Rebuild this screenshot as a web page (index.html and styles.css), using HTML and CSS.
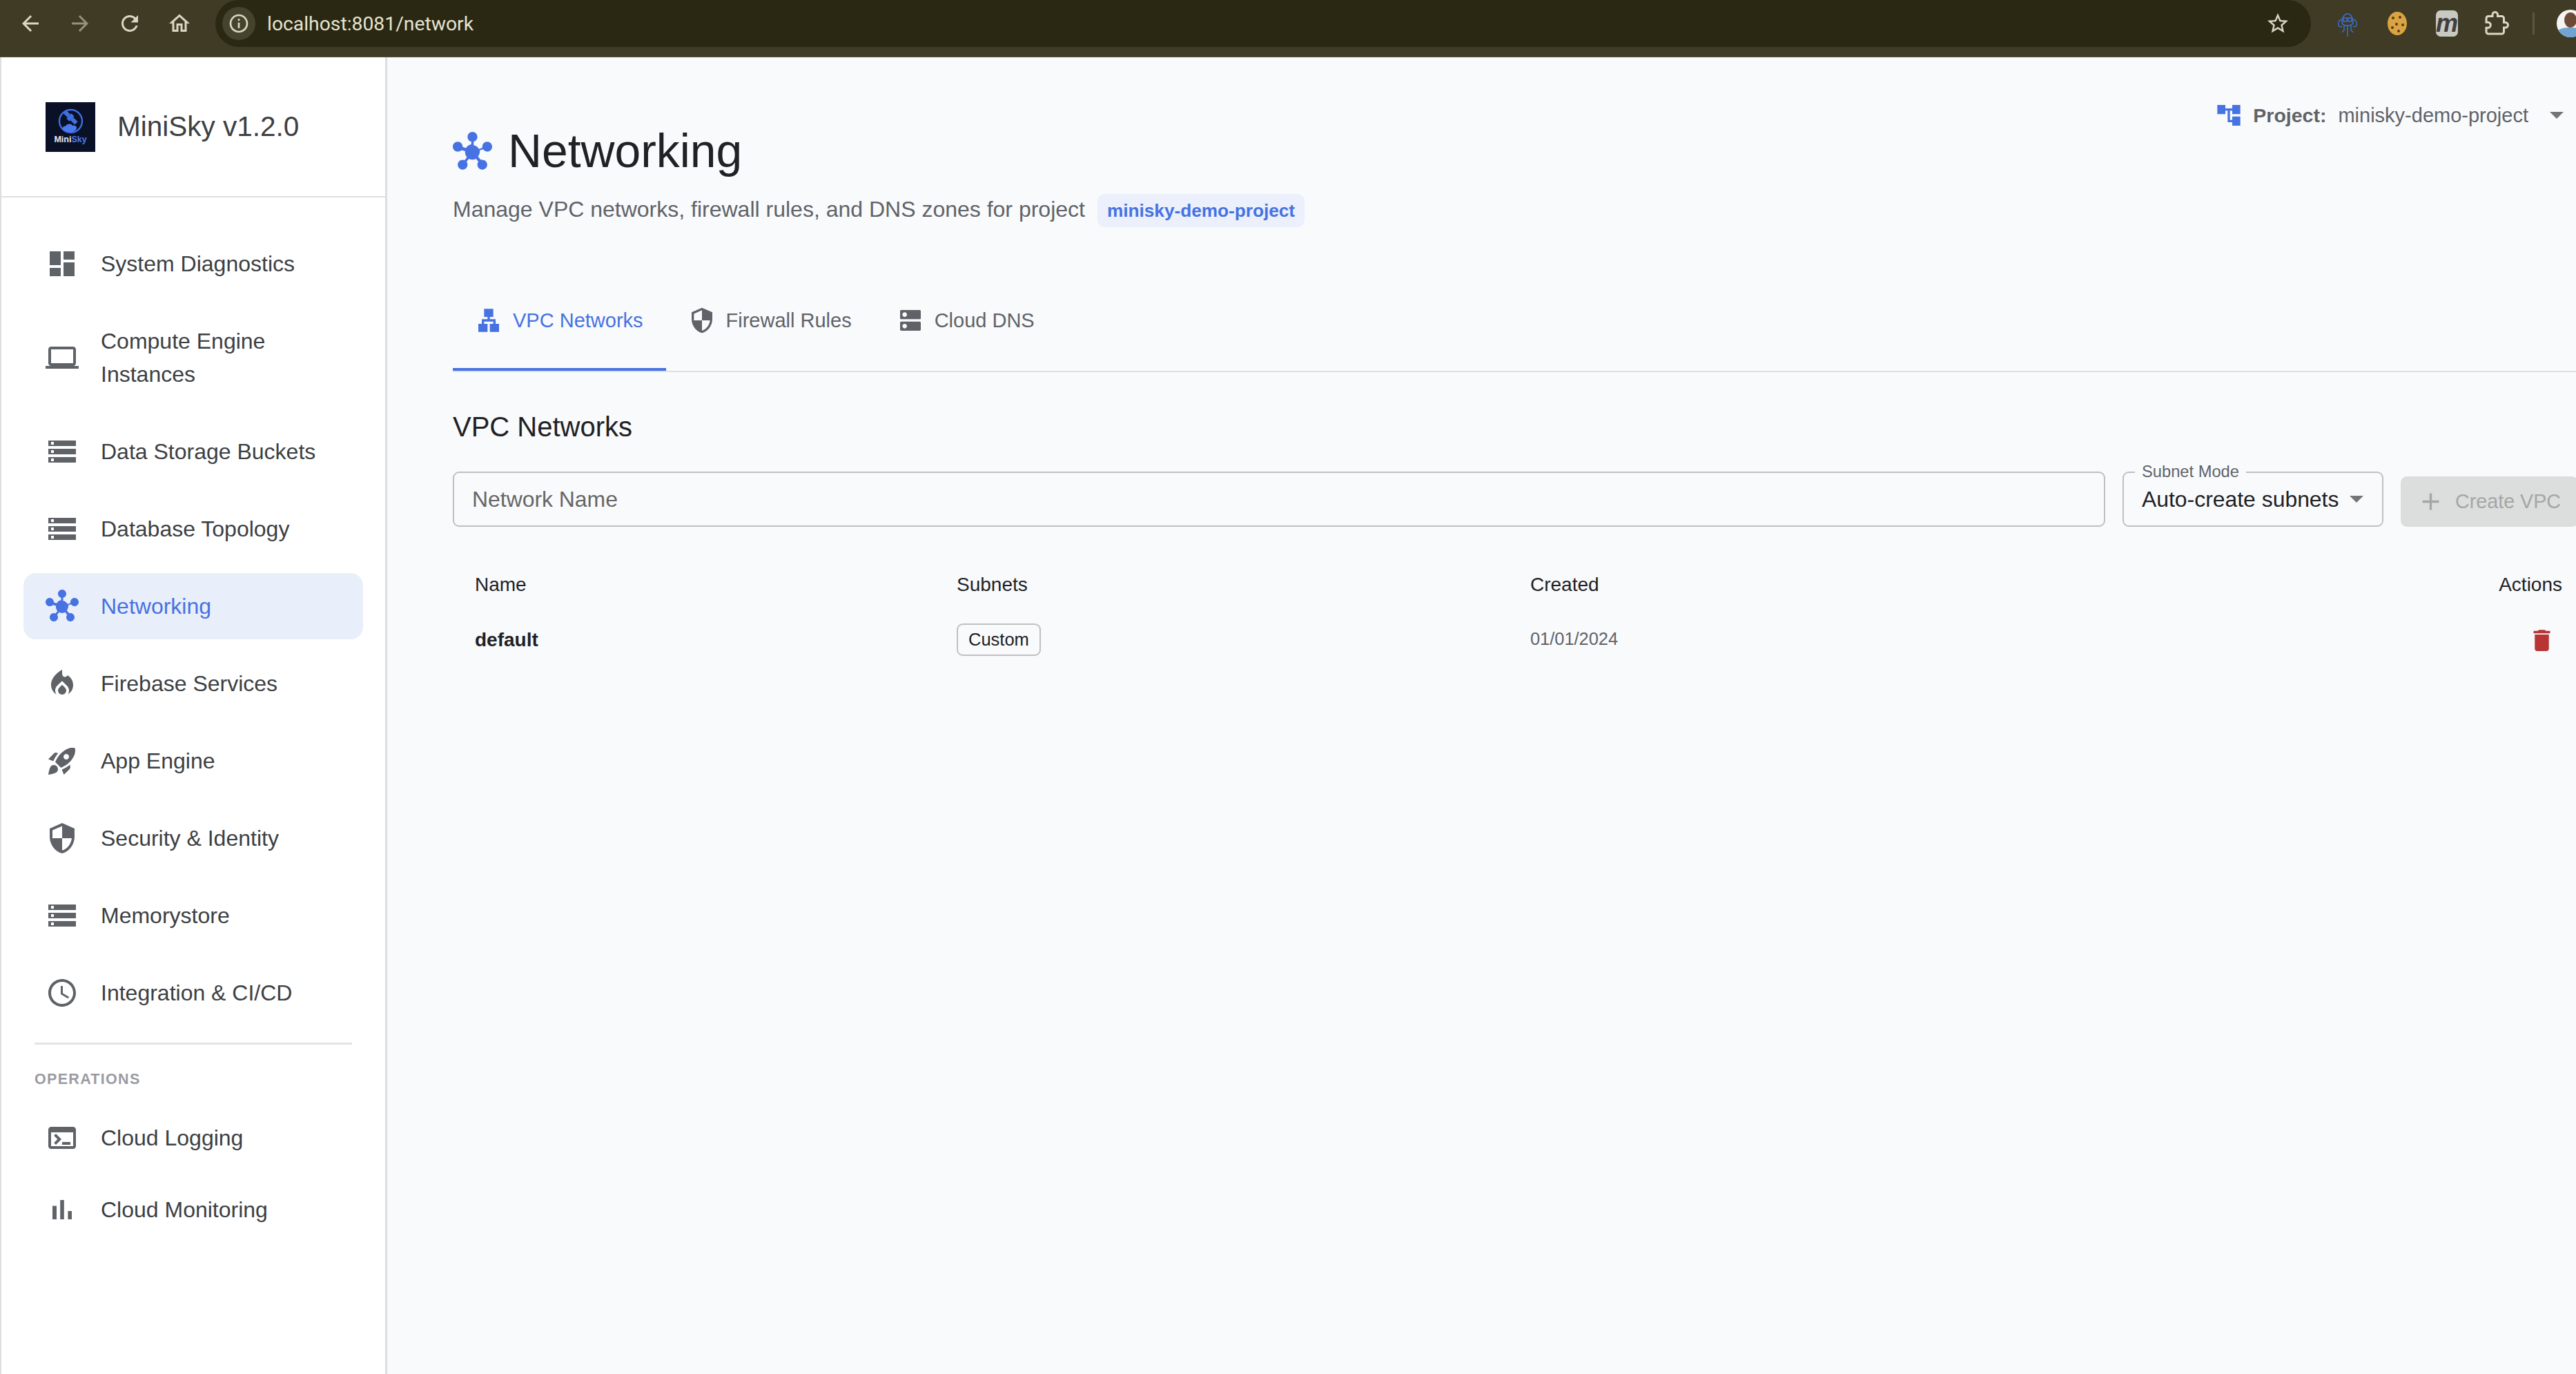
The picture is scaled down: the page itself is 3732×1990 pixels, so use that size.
FILE: index.html
```html
<!DOCTYPE html>
<html lang="en">
<head>
    <meta charset="UTF-8">
    <title>MiniSky - Networking</title>
    <link rel="stylesheet" href="styles.css">
</head>
<body>
    <!-- Material icons used across the page -->
    <svg class="icon-defs" xmlns="http://www.w3.org/2000/svg">
        <symbol id="i-dashboard" viewBox="0 0 24 24"><path d="M3 13h8V3H3v10zm0 8h8v-6H3v6zm10 0h8V11h-8v10zm0-18v6h8V3h-8z"/></symbol>
        <symbol id="i-laptop" viewBox="0 0 24 24"><path d="M20 18c1.1 0 1.99-.9 1.99-2L22 6c0-1.1-.9-2-2-2H4c-1.1 0-2 .9-2 2v10c0 1.1.9 2 2 2H0v2h24v-2h-4zM4 6h16v10H4V6z"/></symbol>
        <symbol id="i-storage" viewBox="0 0 24 24"><path d="M2 20h20v-4H2v4zm2-3h2v2H4v-2zM2 4v4h20V4H2zm4 3H4V5h2v2zm-4 7h20v-4H2v4zm2-3h2v2H4v-2z"/></symbol>
        <symbol id="i-hub" viewBox="0 0 24 24"><path d="M8.4 18.2c.38.5.6 1.12.6 1.8 0 1.66-1.34 3-3 3s-3-1.34-3-3 1.34-3 3-3c.44 0 .85.09 1.23.26l1.41-1.77c-.92-1.03-1.29-2.39-1.09-3.69l-2.03-.68C4.98 11.45 4.06 12 3 12c-1.66 0-3-1.34-3-3s1.34-3 3-3 3 1.34 3 3c0 .07 0 .14-.01.21l2.03.68c.64-1.21 1.82-2.09 3.22-2.32V5.91C9.96 5.57 9 4.4 9 3c0-1.66 1.34-3 3-3s3 1.34 3 3c0 1.4-.96 2.57-2.25 2.91v2.16c1.4.23 2.58 1.11 3.22 2.32l2.03-.68C18 9.14 18 9.07 18 9c0-1.66 1.34-3 3-3s3 1.34 3 3-1.34 3-3 3c-1.06 0-1.98-.55-2.52-1.37l-2.03.68c.2 1.29-.16 2.65-1.09 3.69l1.41 1.77C17.15 17.09 17.56 17 18 17c1.66 0 3 1.34 3 3s-1.34 3-3 3-3-1.34-3-3c0-.68.22-1.3.6-1.8l-1.41-1.77c-1.35.75-3.01.76-4.37 0L8.4 18.2z"/></symbol>
        <symbol id="i-fire" viewBox="0 0 24 24"><path d="M12 12.9l-2.13 2.09c-.56.56-.87 1.29-.87 2.07C9 18.68 10.35 20 12 20s3-1.32 3-2.94c0-.78-.31-1.52-.87-2.07L12 12.9z"/><path d="M16 6l-.44.55C14.38 8.02 12 7.08 12 5V2S4 6 4 13c0 2.92 1.56 5.47 3.89 6.86-.56-.79-.89-1.76-.89-2.8 0-1.32.52-2.56 1.47-3.5L12 10.1l3.53 3.47c.95.93 1.47 2.17 1.47 3.5 0 1.02-.31 1.96-.85 2.75.43-.26.82-.56 1.18-.9C18.98 17.72 20 15.5 20 13c0-2.57-1.24-5.16-4-7z"/></symbol>
        <symbol id="i-rocket" viewBox="0 0 24 24"><path d="M9.19 6.35c-2.04 2.29-3.44 5.58-3.57 5.89L2 10.69l4.05-4.05c.47-.47 1.15-.68 1.81-.55l1.33.26zM11.17 17s3.74-1.55 5.89-3.7c5.4-5.4 4.5-9.62 4.21-10.57-.95-.3-5.17-1.19-10.57 4.21C8.55 9.09 7 12.83 7 12.83L11.17 17zm6.48-2.19c-2.29 2.04-5.58 3.44-5.89 3.57L13.31 22l4.05-4.05c.47-.47.68-1.15.55-1.81l-.26-1.33zM9 18c0 .83-.34 1.58-.88 2.12C6.94 21.3 2 22 2 22s.7-4.94 1.88-6.12C4.42 15.34 5.17 15 6 15c1.66 0 3 1.34 3 3zm4-9c0-1.1.9-2 2-2s2 .9 2 2-.9 2-2 2-2-.9-2-2z"/></symbol>
        <symbol id="i-shield" viewBox="0 0 24 24"><path d="M12 1L3 5v6c0 5.55 3.84 10.74 9 12 5.16-1.26 9-6.45 9-12V5l-9-4zm0 10.99h7c-.53 4.12-3.28 7.79-7 8.94V12H5V6.3l7-3.11v8.8z"/></symbol>
        <symbol id="i-clock" viewBox="0 0 24 24"><path d="M11.99 2C6.47 2 2 6.48 2 12s4.47 10 9.99 10C17.52 22 22 17.52 22 12S17.52 2 11.99 2zM12 20c-4.42 0-8-3.58-8-8s3.58-8 8-8 8 3.58 8 8-3.58 8-8 8zm.5-13H11v6l5.25 3.15.75-1.23-4.5-2.67z"/></symbol>
        <symbol id="i-terminal" viewBox="0 0 24 24"><path d="M20 4H4c-1.1 0-2 .9-2 2v12c0 1.1.9 2 2 2h16c1.1 0 2-.9 2-2V6c0-1.1-.9-2-2-2zm0 14H4V8h16v10zm-2-1h-6v-2h6v2zM7.5 17l-1.41-1.41L8.67 13l-2.59-2.59L7.5 9l4 4-4 4z"/></symbol>
        <symbol id="i-chart" viewBox="0 0 24 24"><path d="M5 9.2h3V19H5zM10.6 5h2.8v14h-2.8zm5.6 8H19v6h-2.8z"/></symbol>
        <symbol id="i-tree" viewBox="0 0 24 24"><path d="M22 11V3h-7v3H9V3H2v8h7V8h2v10h4v3h7v-8h-7v3h-2V8h2v3z"/></symbol>
        <symbol id="i-lan" viewBox="0 0 24 24"><path d="M13 22h8v-7h-3v-4h-5V9h3V2H8v7h3v2H6v4H3v7h8v-7H8v-2h8v2h-3z"/></symbol>
        <symbol id="i-dns" viewBox="0 0 24 24"><path d="M20 13H4c-.55 0-1 .45-1 1v6c0 .55.45 1 1 1h16c.55 0 1-.45 1-1v-6c0-.55-.45-1-1-1zM7 19c-1.1 0-2-.9-2-2s.9-2 2-2 2 .9 2 2-.9 2-2 2zM20 3H4c-.55 0-1 .45-1 1v6c0 .55.45 1 1 1h16c.55 0 1-.45 1-1V4c0-.55-.45-1-1-1zM7 9c-1.1 0-2-.9-2-2s.9-2 2-2 2 .9 2 2-.9 2-2 2z"/></symbol>
        <symbol id="i-add" viewBox="0 0 24 24"><path d="M19 13h-6v6h-2v-6H5v-2h6V5h2v6h6v2z"/></symbol>
        <symbol id="i-delete" viewBox="0 0 24 24"><path d="M6 19c0 1.1.9 2 2 2h8c1.1 0 2-.9 2-2V7H6v12zM19 4h-3.5l-1-1h-5l-1 1H5v2h14V4z"/></symbol>
    </svg>

    <!-- Browser toolbar -->
    <div class="browser-bar">
        <div class="tool-btn"><svg class="tool-icon" viewBox="0 0 24 24"><path d="M20 11H7.83l5.59-5.59L12 4l-8 8 8 8 1.41-1.41L7.83 13H20v-2z"/></svg></div>
        <div class="tool-btn dim"><svg class="tool-icon" viewBox="0 0 24 24"><path d="M4 11h12.17l-5.59-5.59L12 4l8 8-8 8-1.41-1.41L16.17 13H4v-2z"/></svg></div>
        <div class="tool-btn"><svg class="tool-icon" viewBox="0 0 24 24"><path d="M17.65 6.35C16.2 4.9 14.21 4 12 4c-4.42 0-7.99 3.58-7.99 8s3.57 8 7.99 8c3.73 0 6.84-2.55 7.73-6h-2.08c-.82 2.33-3.04 4-5.65 4-3.31 0-6-2.69-6-6s2.69-6 6-6c1.66 0 3.14.69 4.22 1.78L13 11h7V4l-2.35 2.35z"/></svg></div>
        <div class="tool-btn"><svg class="tool-icon" viewBox="0 0 24 24"><path d="M12 5.69l5 4.5V18h-2v-6H9v6H7v-7.81l5-4.5M12 3L2 12h3v8h6v-6h2v6h6v-8h3L12 3z"/></svg></div>
        <div class="address-pill">
            <span class="site-info"><svg class="info-icon" viewBox="0 0 24 24"><path d="M11 7h2v2h-2zm0 4h2v6h-2zm1-9C6.48 2 2 6.48 2 12s4.48 10 10 10 10-4.48 10-10S17.52 2 12 2zm0 18c-4.41 0-8-3.59-8-8s3.59-8 8-8 8 3.59 8 8-3.59 8-8 8z"/></svg></span>
            <span class="url">localhost:8081/network</span>
            <svg class="star-icon" viewBox="0 0 24 24"><path d="M22 9.24l-7.19-.62L12 2 9.19 8.63 2 9.24l5.46 4.73L5.82 21 12 17.27 18.18 21l-1.63-7.03L22 9.24zM12 15.4l-3.76 2.27 1-4.28-3.32-2.88 4.38-.38L12 6.1l1.71 4.04 4.38.38-3.32 2.88 1 4.28L12 15.4z"/></svg>
        </div>
        <div class="extensions">
            <div class="tool-btn">
                <svg class="ext-icon" viewBox="0 0 36 44" fill="none" stroke="#3a6fd8" stroke-width="1.5">
                    <path d="M10 20c0-6 3-12 8-12s8 6 8 12c0 3-2 5-8 5s-8-2-8-5z"/>
                    <rect x="12" y="14" width="5" height="5"/><rect x="19" y="14" width="5" height="5"/>
                    <path d="M9 16c-4 2-5 6-4 9 1 2 4 2 5 1M27 16c4 2 5 6 4 9-1 2-4 2-5 1M13 25v6c0 2-2 2-3 4M23 25v6c0 2 2 2 3 4M18 25v16"/>
                </svg>
            </div>
            <div class="tool-btn">
                <svg class="ext-icon" viewBox="0 0 36 44">
                    <ellipse cx="18" cy="22" rx="14" ry="17" fill="#d9a441"/>
                    <circle cx="12" cy="14" r="2" fill="#5b3a17"/><circle cx="22" cy="13" r="2" fill="#5b3a17"/>
                    <circle cx="17" cy="23" r="2" fill="#5b3a17"/><circle cx="26" cy="24" r="2" fill="#5b3a17"/>
                    <circle cx="11" cy="28" r="2" fill="#5b3a17"/><circle cx="20" cy="33" r="2" fill="#5b3a17"/>
                </svg>
            </div>
            <div class="tool-btn"><span class="ext-m">m</span></div>
            <div class="tool-btn"><svg class="tool-icon puzzle" viewBox="0 0 24 24"><path d="M20.5 11H19V7c0-1.1-.9-2-2-2h-4V3.5C13 2.12 11.88 1 10.5 1S8 2.12 8 3.5V5H4c-1.1 0-1.99.9-1.99 2v3.8H3.5c1.49 0 2.7 1.21 2.7 2.7s-1.21 2.7-2.7 2.7H2V20c0 1.1.9 2 2 2h13c1.1 0 2-.9 2-2v-4h1.5c1.38 0 2.5-1.12 2.5-2.5S21.88 11 20.5 11z"/></svg></div>
        </div>
        <div class="bar-sep"></div>
        <svg class="avatar" viewBox="0 0 40 40">
            <clipPath id="avatarClip"><circle cx="20" cy="20" r="20"/></clipPath>
            <g clip-path="url(#avatarClip)">
                <rect width="40" height="40" fill="#f4f4f2"/>
                <ellipse cx="20" cy="15" rx="9" ry="11" fill="#6b4a36"/>
                <path d="M0 40V32c4-5 10-6 20-6s16 1 20 6v8z" fill="#6fa5cf"/>
            </g>
        </svg>
    </div>

    <div class="app">
        <!-- Sidebar -->
        <aside class="sidebar">
            <div class="brand">
                <svg class="brand-logo" viewBox="0 0 72 72">
                    <rect width="72" height="72" fill="#0a1026"/>
                    <circle cx="36.5" cy="27.5" r="16.5" fill="none" stroke="#3f6fe0" stroke-width="2.4"/>
                    <g fill="#3f6fe0" transform="rotate(45 36 22)">
                        <rect x="24" y="19" width="9" height="6"/>
                        <rect x="39" y="19" width="9" height="6"/>
                        <rect x="33" y="17" width="6" height="10"/>
                    </g>
                    <path d="M25 39c-1-3 2-5 4-4 1-4 8-5 10-1 3-1 7 1 6 4-2 4-5 5-9 5s-9-1-11-4z" fill="#4a7bee"/>
                    <text class="logo-text" x="36" y="58" text-anchor="middle">Mini<tspan fill="#4a7bee">Sky</tspan></text>
                </svg>
                <span class="brand-name">MiniSky v1.2.0</span>
            </div>
            <nav class="nav-list">
                <a class="nav-item"><svg class="nav-icon"><use href="#i-dashboard"/></svg><span>System Diagnostics</span></a>
                <a class="nav-item"><svg class="nav-icon"><use href="#i-laptop"/></svg><span>Compute Engine Instances</span></a>
                <a class="nav-item"><svg class="nav-icon"><use href="#i-storage"/></svg><span>Data Storage Buckets</span></a>
                <a class="nav-item"><svg class="nav-icon"><use href="#i-storage"/></svg><span>Database Topology</span></a>
                <a class="nav-item active"><svg class="nav-icon"><use href="#i-hub"/></svg><span>Networking</span></a>
                <a class="nav-item"><svg class="nav-icon"><use href="#i-fire"/></svg><span>Firebase Services</span></a>
                <a class="nav-item"><svg class="nav-icon"><use href="#i-rocket"/></svg><span>App Engine</span></a>
                <a class="nav-item"><svg class="nav-icon"><use href="#i-shield"/></svg><span>Security &amp; Identity</span></a>
                <a class="nav-item"><svg class="nav-icon"><use href="#i-storage"/></svg><span>Memorystore</span></a>
                <a class="nav-item"><svg class="nav-icon"><use href="#i-clock"/></svg><span>Integration &amp; CI/CD</span></a>
            </nav>
            <div class="nav-divider"></div>
            <div class="nav-section">OPERATIONS</div>
            <nav class="nav-list compact">
                <a class="nav-item"><svg class="nav-icon"><use href="#i-terminal"/></svg><span>Cloud Logging</span></a>
                <a class="nav-item"><svg class="nav-icon"><use href="#i-chart"/></svg><span>Cloud Monitoring</span></a>
            </nav>
        </aside>

        <!-- Main Content -->
        <main class="main">
            <div class="content">
                <div class="page-head">
                    <div class="page-title">
                        <h1><svg class="title-icon"><use href="#i-hub"/></svg>Networking</h1>
                        <p class="subtitle"><span class="subtitle-text">Manage VPC networks, firewall rules, and DNS zones for project</span> <span class="project-chip">minisky-demo-project</span></p>
                    </div>
                    <div class="project-picker">
                        <svg class="project-icon"><use href="#i-tree"/></svg>
                        <strong>Project:</strong>
                        <span class="project-value">minisky-demo-project</span>
                        <span class="caret"></span>
                    </div>
                </div>

                <div class="tabs">
                    <div class="tab active"><svg class="tab-icon"><use href="#i-lan"/></svg>VPC Networks</div>
                    <div class="tab"><svg class="tab-icon"><use href="#i-shield"/></svg>Firewall Rules</div>
                    <div class="tab"><svg class="tab-icon"><use href="#i-dns"/></svg>Cloud DNS</div>
                </div>

                <h2>VPC Networks</h2>

                <div class="create-row">
                    <input class="name-input" type="text" placeholder="Network Name">
                    <div class="select-box">
                        <span class="select-label">Subnet Mode</span>
                        <span>Auto-create subnets</span>
                        <span class="caret"></span>
                    </div>
                    <button class="create-btn" disabled><svg class="add-icon"><use href="#i-add"/></svg>Create VPC</button>
                </div>

                <div class="net-table">
                    <div class="cell head">Name</div>
                    <div class="cell head">Subnets</div>
                    <div class="cell head">Created</div>
                    <div class="cell head actions">Actions</div>
                    <div class="cell name">default</div>
                    <div class="cell"><span class="tag">Custom</span></div>
                    <div class="cell date">01/01/2024</div>
                    <div class="cell actions"><svg class="delete-icon"><use href="#i-delete"/></svg></div>
                </div>
            </div>
        </main>
    </div>
</body>
</html>
```
FILE: styles.css
```css
* {
    box-sizing: border-box;
}

body {
    margin: 0;
    height: 1990px;
    overflow: hidden;
    display: flex;
    flex-direction: column;
    font-family: "Liberation Sans", Arial, sans-serif;
    background: #f9fafc;
    color: #202124;
}

.icon-defs {
    display: none;
}

/* Browser toolbar */
.browser-bar {
    height: 83px;
    flex-shrink: 0;
    display: flex;
    align-items: flex-start;
    padding-left: 8px;
    background: #3f3b25;
    border-bottom: 1px solid #55523f;
    color: #dad8c4;
}

.tool-btn {
    width: 72px;
    height: 68px;
    flex-shrink: 0;
    display: flex;
    align-items: center;
    justify-content: center;
}

.tool-btn.dim {
    opacity: 0.55;
}

.tool-icon {
    width: 36px;
    height: 36px;
    fill: currentColor;
}

.puzzle {
    fill: none;
    stroke: currentColor;
    stroke-width: 2;
}

.address-pill {
    flex: 1;
    height: 68px;
    margin-left: 16px;
    padding: 0 30px 0 10px;
    display: flex;
    align-items: center;
    background: #2a2712;
    border-radius: 34px;
}

.site-info {
    width: 48px;
    height: 48px;
    display: flex;
    align-items: center;
    justify-content: center;
    background: #46432d;
    border-radius: 50%;
}

.info-icon {
    width: 32px;
    height: 32px;
    fill: currentColor;
}

.url {
    margin-left: 17px;
    font-family: Roboto, sans-serif;
    font-size: 28.3px;
    color: #e6e4d2;
}

.star-icon {
    width: 36px;
    height: 36px;
    margin-left: auto;
    fill: currentColor;
}

.extensions {
    display: flex;
    margin-left: 17px;
}

.ext-icon {
    width: 36px;
    height: 44px;
}

.ext-m {
    width: 32px;
    height: 38px;
    display: flex;
    align-items: center;
    justify-content: center;
    background: #c9c9c4;
    border-radius: 7px;
    font-size: 36px;
    font-weight: bold;
    font-style: italic;
    line-height: 1;
    color: #3f3f3f;
}

.bar-sep {
    width: 3px;
    height: 32px;
    margin: 18px 0 0 16px;
    flex-shrink: 0;
    background: #5a5741;
}

.avatar {
    width: 40px;
    height: 40px;
    margin: 14px -12px 0 32px;
    flex-shrink: 0;
}

/* Page layout */
.app {
    flex: 1;
    display: flex;
    min-height: 0;
}

.sidebar {
    width: 561px;
    flex-shrink: 0;
    background: #fff;
    border-left: 2px solid #dedede;
    border-right: 3px solid #dedede;
}

.brand {
    height: 203px;
    padding-left: 64px;
    display: flex;
    align-items: center;
    gap: 33px;
    border-bottom: 2px solid #e0e0e0;
}

.brand-logo {
    width: 72px;
    height: 72px;
}

.logo-text {
    font-size: 12.5px;
    font-weight: bold;
    fill: #e8e8ee;
}

.brand-name {
    margin-left: -1px;
    font-size: 40.5px;
    color: #3c4043;
}

.nav-list {
    padding: 48px 32px 0;
    display: flex;
    flex-direction: column;
    gap: 16px;
}

.nav-item {
    display: flex;
    align-items: center;
    padding: 24px 32px;
    border-radius: 18px;
    font-size: 32px;
    line-height: 48px;
    color: #3c4043;
}

.nav-item.active {
    background: #e9eefb;
    color: #4672e2;
}

.nav-icon {
    width: 48px;
    height: 48px;
    margin-right: 32px;
    flex-shrink: 0;
    fill: #5f6368;
}

.active .nav-icon {
    fill: #4672e2;
}

.nav-divider {
    height: 3px;
    margin: 24px 48px 0;
    background: #e3e3e3;
}

.nav-section {
    margin: 35px 0 0 48px;
    font-size: 21.5px;
    font-weight: bold;
    line-height: 30px;
    letter-spacing: 1.3px;
    color: #9a9ba3;
}

.nav-list.compact {
    padding-top: 26px;
}

.compact .nav-item {
    padding: 20px 32px;
}

.main {
    flex: 1;
    min-width: 0;
    overflow: hidden;
    padding: 64px 0 0 95px;
}

.content {
    width: 3088px;
}

/* Page header */
.page-head {
    display: flex;
    justify-content: space-between;
    align-items: flex-start;
}

.page-title {
    margin-top: 32px;
}

h1 {
    margin: 0;
    display: flex;
    align-items: center;
    font-size: 67.8px;
    font-weight: normal;
    line-height: 80px;
}

.title-icon {
    width: 57px;
    height: 57px;
    margin-right: 23px;
    fill: #4672e2;
}

.subtitle {
    margin: 22px 0 0;
    display: flex;
    align-items: center;
    gap: 18px;
    height: 48px;
    font-size: 32px;
    color: #5f6368;
}

.subtitle-text {
    margin-bottom: 4px;
}

.project-chip {
    height: 48px;
    padding: 0 14px;
    display: flex;
    align-items: center;
    background: #ebf0fc;
    border-radius: 10px;
    font-size: 26.2px;
    font-weight: bold;
    color: #4672e2;
}

.project-picker {
    height: 40px;
    padding-right: 34px;
    display: flex;
    align-items: center;
    font-size: 28.5px;
    color: #5f6368;
}

.project-icon {
    width: 40px;
    height: 40px;
    margin-right: 15px;
    fill: #4672e2;
}

.project-value {
    margin-left: 17px;
    font-size: 29px;
}

.caret {
    width: 0;
    height: 0;
    margin-left: 16px;
    border-left: 10px solid transparent;
    border-right: 10px solid transparent;
    border-top: 10px solid #757575;
}

.project-picker .caret {
    margin-left: 31px;
    margin-right: -4px;
}

/* Tabs */
.tabs {
    margin-top: 62px;
    display: flex;
    border-bottom: 2px solid #e0e0e0;
}

.tab {
    height: 146px;
    padding: 4px 33px 0 32px;
    display: flex;
    align-items: center;
    gap: 15px;
    border-bottom: 4px solid transparent;
    font-size: 29px;
    color: #5f6368;
}

.tab.active {
    border-bottom-color: #4672e2;
    color: #4672e2;
}

.tab-icon {
    width: 40px;
    height: 40px;
    fill: currentColor;
}

h2 {
    margin: 55px 0 0;
    font-size: 40px;
    font-weight: normal;
    line-height: 48px;
}

/* Create form */
.create-row {
    margin-top: 41px;
    padding-right: 9px;
    display: flex;
    align-items: flex-end;
    gap: 25px;
}

.name-input {
    flex: 1;
    min-width: 0;
    height: 80px;
    padding: 0 26px;
    background: transparent;
    border: 2px solid #c0c0c0;
    border-radius: 9px;
    font-family: inherit;
    font-size: 31.9px;
}

.name-input::placeholder {
    color: #666;
    opacity: 1;
}

.select-box {
    position: relative;
    width: 378px;
    height: 80px;
    padding-left: 26px;
    display: flex;
    align-items: center;
    border: 2px solid #c0c0c0;
    border-radius: 9px;
    font-size: 31.9px;
}

.select-label {
    position: absolute;
    top: -15px;
    left: 16px;
    padding: 0 10px;
    background: #f9fafc;
    font-size: 23.7px;
    line-height: 26px;
    color: #5f6368;
}

.create-btn {
    width: 257px;
    height: 73px;
    padding: 0 0 0 23px;
    display: flex;
    align-items: center;
    gap: 15px;
    background: #dcdddd;
    border: none;
    border-radius: 9px;
    font-family: inherit;
    font-size: 28.7px;
    color: #a6a6a6;
}

.add-icon {
    width: 41px;
    height: 41px;
    fill: currentColor;
}

/* Network table */
.net-table {
    margin-top: 44px;
    padding: 0 32px;
    display: grid;
    grid-template-columns: 698px 831px 1fr auto;
}

.cell {
    height: 80px;
    display: flex;
    align-items: center;
    font-size: 28px;
}

.cell.name {
    font-weight: bold;
}

.cell.actions {
    justify-content: flex-end;
}

.cell.date {
    padding-bottom: 4px;
    font-size: 25.4px;
    color: #5f6368;
}

.tag {
    height: 47px;
    padding: 0 15px;
    margin-bottom: 1px;
    display: flex;
    align-items: center;
    border: 2px solid #c0c0c0;
    border-radius: 9px;
    font-size: 25.5px;
}

.delete-icon {
    width: 41px;
    height: 41px;
    margin-right: 9px;
    fill: #b93535;
}
```
